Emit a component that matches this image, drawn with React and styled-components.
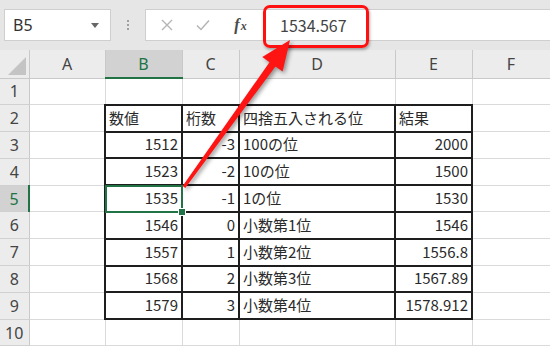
import React from "react";
import styled, { createGlobalStyle } from "styled-components";

const Global = createGlobalStyle`
  html, body { margin: 0; padding: 0; background: #fff; overflow: hidden; }
  * { box-sizing: border-box; }
`;

const Page = styled.div`
  position: relative;
  width: 550px;
  height: 350px;
  overflow: hidden;
  background: #fff;
  font-family: "Noto Sans CJK JP", "Noto Sans", sans-serif;
`;

const TopBar = styled.div`
  height: 50px;
  background: #e6e6e6;
  display: flex;
  align-items: center;
  padding-left: 4px;
`;

const NameBox = styled.div`
  width: 107px;
  height: 32px;
  background: #fff;
  border: 1px solid #cfcfcf;
  display: flex;
  align-items: center;
  justify-content: space-between;
  padding: 0 8px 0 8px;
  font-family: "Noto Sans", "Open Sans", sans-serif;
  font-size: 16px;
  color: #333;
`;

const Caret = styled.span`
  width: 0;
  height: 0;
  border-left: 4px solid transparent;
  border-right: 4px solid transparent;
  border-top: 5px solid #666;
  margin-right: 3px;
`;

const Grip = styled.div`
  width: 34px;
  display: flex;
  flex-direction: column;
  align-items: center;
  gap: 2px;
  & > span {
    width: 2px;
    height: 2px;
    background: #a0a0a0;
  }
`;

const FormulaBox = styled.div`
  flex: 1;
  height: 32px;
  background: #fff;
  border: 1px solid #cfcfcf;
  border-right: none;
  display: flex;
  align-items: center;
`;

const IconSlot = styled.div`
  width: ${(p) => p.$w}px;
  display: flex;
  justify-content: center;
  align-items: center;
`;

const Fx = styled.span`
  font-family: "Liberation Serif", "DejaVu Serif", serif;
  font-style: italic;
  font-weight: bold;
  font-size: 16px;
  color: #4a4a4a;
  & > small {
    font-size: 12px;
    margin-left: 1px;
  }
`;

const FormulaText = styled.div`
  position: relative;
  width: 100px;
  height: 30px;
  display: flex;
  align-items: center;
  padding-left: 17px;
  font-family: "Noto Sans CJK JP", "Noto Sans", sans-serif;
  font-size: 16px;
  color: #444;
  &::after {
    content: "";
    position: absolute;
    left: 0;
    top: -5px;
    width: 100px;
    height: 37px;
    border: 3px solid #ff1010;
    border-radius: 7px;
    box-shadow: 1px 2px 3px rgba(0, 0, 0, 0.3);
  }
`;

const Sheet = styled.table`
  border-collapse: collapse;
  table-layout: fixed;
  width: 550px;
`;

const ColHead = styled.th`
  height: 28px;
  padding: 0;
  background: ${(p) => (p.$sel ? "#d2d2d2" : "#ececec")};
  color: ${(p) => (p.$sel ? "#217346" : "#444")};
  border-right: 1px solid #c9c9c9;
  border-bottom: ${(p) => (p.$sel ? "2px solid #217346" : "1px solid #c9c9c9")};
  font-family: "Noto Sans", "Open Sans", sans-serif;
  font-weight: normal;
  font-size: 16px;
  text-align: center;
  vertical-align: middle;
`;

const Corner = styled.th`
  padding: 0;
  background: #ececec;
  border-right: 1px solid #c9c9c9;
  border-bottom: 1px solid #c9c9c9;
`;

const CornerMark = styled.svg`
  display: block;
  margin: 6px 3px 2px auto;
`;

const RowHead = styled.th`
  height: 26.8px;
  padding: 0;
  background: ${(p) => (p.$sel ? "#d2d2d2" : "#ececec")};
  color: ${(p) => (p.$sel ? "#217346" : "#444")};
  border-bottom: 1px solid #d0d0d0;
  border-right: ${(p) => (p.$sel ? "2px solid #217346" : "1px solid #c9c9c9")};
  font-family: "Noto Sans", "Open Sans", sans-serif;
  font-weight: normal;
  font-size: 16px;
  text-align: center;
  vertical-align: middle;
`;

const Cell = styled.td`
  position: relative;
  height: 26.8px;
  padding: 0 3px 2px 3px;
  border: ${(p) => (p.$box ? "2px solid #1e1e1e" : "1px solid #dadada")};
  font-size: 15px;
  color: #2a2a2a;
  text-align: ${(p) => (p.$num ? "right" : "left")};
  vertical-align: bottom;
  white-space: nowrap;
  line-height: 22px;
  ${(p) =>
    p.$sel &&
    `
    &::after {
      content: "";
      position: absolute;
      left: -1px;
      top: -1px;
      right: -2px;
      bottom: -2px;
      border: 2px solid #217346;
      pointer-events: none;
    }
    &::before {
      content: "";
      position: absolute;
      right: -5px;
      bottom: -5px;
      width: 6px;
      height: 6px;
      background: #217346;
      border: 1px solid #fff;
      z-index: 2;
    }
  `}
`;

const ArrowLayer = styled.svg`
  position: absolute;
  left: 0;
  top: 0;
  pointer-events: none;
  filter: drop-shadow(2px 2px 2px rgba(0, 0, 0, 0.4));
`;

const cols = [
  { k: "A", w: 76 },
  { k: "B", w: 77 },
  { k: "C", w: 57 },
  { k: "D", w: 156 },
  { k: "E", w: 77 },
  { k: "F", w: 78 },
];

const data = [
  ["1512", "-3", "100の位", "2000"],
  ["1523", "-2", "10の位", "1500"],
  ["1535", "-1", "1の位", "1530"],
  ["1546", "0", "小数第1位", "1546"],
  ["1557", "1", "小数第2位", "1556.8"],
  ["1568", "2", "小数第3位", "1567.89"],
  ["1579", "3", "小数第4位", "1578.912"],
];

function Arrow() {
  const sx = 184, sy = 187;
  const tx = 290, ty = 40;
  const dx = tx - sx, dy = ty - sy;
  const L = Math.hypot(dx, dy);
  const ux = dx / L, uy = dy / L;
  const nx = -uy, ny = ux;
  const headLen = 30, headHalf = 12.5;
  const bx = tx - ux * headLen, by = ty - uy * headLen;
  const w0 = 1.6, w1 = 3.6;
  const pts = [
    [sx + nx * w0, sy + ny * w0],
    [bx + nx * w1, by + ny * w1],
    [bx + nx * headHalf, by + ny * headHalf],
    [tx, ty],
    [bx - nx * headHalf, by - ny * headHalf],
    [bx - nx * w1, by - ny * w1],
    [sx - nx * w0, sy - ny * w0],
  ]
    .map((p) => p.map((v) => v.toFixed(1)).join(","))
    .join(" ");
  return (
    <ArrowLayer width="550" height="350" viewBox="0 0 550 350">
      <polygon points={pts} fill="#ff1414" />
    </ArrowLayer>
  );
}

export default function App() {
  const rows = [];
  for (let r = 1; r <= 10; r++) {
    const sel = r === 5;
    let cells;
    if (r === 2) {
      cells = [
        <Cell key="a" />,
        <Cell key="b" $box>数値</Cell>,
        <Cell key="c" $box>桁数</Cell>,
        <Cell key="d" $box>四捨五入される位</Cell>,
        <Cell key="e" $box>結果</Cell>,
        <Cell key="f" />,
      ];
    } else if (r >= 3 && r <= 9) {
      const d = data[r - 3];
      cells = [
        <Cell key="a" />,
        <Cell key="b" $box $num $sel={sel}>{d[0]}</Cell>,
        <Cell key="c" $box $num>{d[1]}</Cell>,
        <Cell key="d" $box>{d[2]}</Cell>,
        <Cell key="e" $box $num>{d[3]}</Cell>,
        <Cell key="f" />,
      ];
    } else {
      cells = cols.map((c) => <Cell key={c.k} />);
    }
    rows.push(
      <tr key={r}>
        <RowHead $sel={sel}>{r}</RowHead>
        {cells}
      </tr>
    );
  }

  return (
    <Page>
      <Global />
      <TopBar>
        <NameBox>
          B5
          <Caret />
        </NameBox>
        <Grip>
          <span />
          <span />
          <span />
        </Grip>
        <FormulaBox>
          <IconSlot $w={42}>
            <svg width="12" height="12" viewBox="0 0 12 12">
              <path d="M1 1 L11 11 M11 1 L1 11" stroke="#b5b5b5" strokeWidth="1.4" fill="none" />
            </svg>
          </IconSlot>
          <IconSlot $w={30}>
            <svg width="14" height="12" viewBox="0 0 14 12">
              <path d="M1 6.5 L5 10.5 L13 1.5" stroke="#b5b5b5" strokeWidth="1.5" fill="none" />
            </svg>
          </IconSlot>
          <IconSlot $w={45}>
            <Fx>
              f<small>x</small>
            </Fx>
          </IconSlot>
          <FormulaText>1534.567</FormulaText>
        </FormulaBox>
      </TopBar>
      <Sheet>
        <colgroup>
          <col style={{ width: 29 }} />
          {cols.map((c) => (
            <col key={c.k} style={{ width: c.w }} />
          ))}
        </colgroup>
        <thead>
          <tr>
            <Corner>
              <CornerMark width="18" height="18" viewBox="0 0 18 18">
                <polygon points="0,18 18,18 18,0" fill="#c4c4c4" />
              </CornerMark>
            </Corner>
            {cols.map((c) => (
              <ColHead key={c.k} $sel={c.k === "B"}>
                {c.k}
              </ColHead>
            ))}
          </tr>
        </thead>
        <tbody>{rows}</tbody>
      </Sheet>
      <Arrow />
    </Page>
  );
}
